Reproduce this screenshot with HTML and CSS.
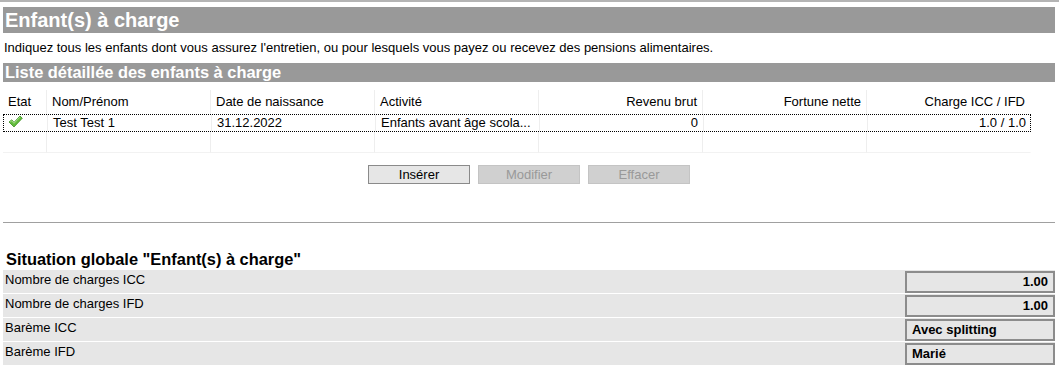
FILE: index.html
```html
<!DOCTYPE html>
<html>
<head lang="fr">
    <meta charset="UTF-8">
    <title>Enfant(s) à charge</title>
    <link rel="stylesheet" href="styles.css">
</head>
<body>
    <div id="topline"></div>
    <div id="page">
        <h1 class="title">Enfant(s) à charge</h1>
        <p class="intro">Indiquez tous les enfants dont vous assurez l'entretien, ou pour lesquels vous payez ou recevez des pensions alimentaires.</p>
        <h2 class="sub">Liste détaillée des enfants à charge</h2>

        <div id="list">
            <div class="row head">
                <div>Etat</div>
                <div>Nom/Prénom</div>
                <div>Date de naissance</div>
                <div>Activité</div>
                <div class="num">Revenu brut</div>
                <div class="num">Fortune nette</div>
                <div class="num">Charge ICC / IFD</div>
            </div>
            <div class="row data">
                <div class="ok">
                    <svg width="15" height="13" viewBox="0 0 15 13">
                        <path d="M1 7 L3.8 4.8 L6 7.4 L12 1 L14.3 3.2 L6 12 Z" fill="#62bb3c" stroke="#3f8f22" stroke-width="0.8"/>
                        <path d="M2.2 6.9 L3.8 5.8 L6 8.3 L12 2.1" fill="none" stroke="#b6e79a" stroke-width="0.8"/>
                    </svg>
                </div>
                <div>Test Test 1</div>
                <div>31.12.2022</div>
                <div>Enfants avant âge scola...</div>
                <div class="num">0</div>
                <div class="num"></div>
                <div class="num">1.0 / 1.0</div>
            </div>
            <div class="row empty">
                <div></div><div></div><div></div><div></div><div></div><div></div><div></div>
            </div>
        </div>

        <div id="buttons">
            <button class="btn">Insérer</button>
            <button class="btn off">Modifier</button>
            <button class="btn off">Effacer</button>
        </div>

        <div class="sep"></div>

        <h3 class="global">Situation globale "Enfant(s) à charge"</h3>
        <div class="line"><span>Nombre de charges ICC</span><b class="val num">1.00</b></div>
        <div class="line"><span>Nombre de charges IFD</span><b class="val num">1.00</b></div>
        <div class="line"><span>Barème ICC</span><b class="val">Avec splitting</b></div>
        <div class="line"><span>Barème IFD</span><b class="val">Marié</b></div>
    </div>
</body>
</html>
```

FILE: styles.css
```css
 *{
     margin: 0;
     padding: 0;
     box-sizing: border-box;
 }
 body{
     font-family: "Liberation Sans", Arial, sans-serif;
     font-size: 13px;
     color: #000;
     background: #fff;
 }
 #topline{
     height: 2px;
     background-color: #b4b4b4;
 }
 #page{
     padding: 5px 4px 0 3px;
 }
 .title{
     height: 26px;
     line-height: 26px;
     background-color: #999;
     color: #fff;
     font-size: 20px;
     font-weight: bold;
     padding-left: 2px;
 }
 .intro{
     height: 30px;
     line-height: 30px;
     padding-left: 1px;
 }
 .sub{
     height: 19px;
     line-height: 19px;
     background-color: #999;
     color: #fff;
     font-size: 16.4px;
     font-weight: bold;
     padding-left: 2px;
 }
 #list{
     margin-top: 8px;
     width: 1028px;
 }
 .row{
     display: grid;
     grid-template-columns: 44px repeat(6, 164px);
 }
 .row div{
     border-right: 1px solid #eee;
     padding: 0 5px;
     white-space: nowrap;
     overflow: hidden;
 }
 .row div:last-child{
     border-right: 1px solid transparent;
 }
 .row .num{
     text-align: right;
 }
 .head div{
     height: 24px;
     line-height: 24px;
 }
 .data{
     border: 1px dotted #000;
 }
 .data div{
     height: 16px;
     line-height: 16px;
 }
 .data .ok{
     padding-left: 4px;
 }
 .empty div{
     height: 21px;
     border-bottom: 1px solid #f2f2f2;
 }
 #buttons{
     display: flex;
     justify-content: center;
     gap: 8px;
     margin-top: 12px;
 }
 .btn{
     width: 102px;
     height: 19px;
     font-family: "Liberation Sans", Arial, sans-serif;
     font-size: 13px;
     background-color: #e6e6e6;
     border: 1px solid #8a8a8a;
     color: #000;
 }
 .btn.off{
     background-color: #d0d0d0;
     border-color: #c4c4c4;
     color: #999;
 }
 .sep{
     margin-top: 38px;
     height: 1px;
     background-color: #a0a0a0;
 }
 .global{
     font-size: 16.4px;
     font-weight: bold;
     margin-top: 26px;
     padding-left: 3px;
     height: 21px;
     line-height: 21px;
 }
 .line{
     display: flex;
     justify-content: space-between;
     align-items: center;
     height: 23px;
     margin-bottom: 1px;
     background-color: #e6e6e6;
     padding-left: 2px;
 }
 .line span{
     line-height: 20px;
     align-self: flex-start;
 }
 .val{
     width: 150px;
     height: 22px;
     line-height: 18px;
     border: 2px solid #8c8c8c;
     padding: 0 5px;
     font-size: 13px;
 }
 .val.num{
     text-align: right;
 }
```
